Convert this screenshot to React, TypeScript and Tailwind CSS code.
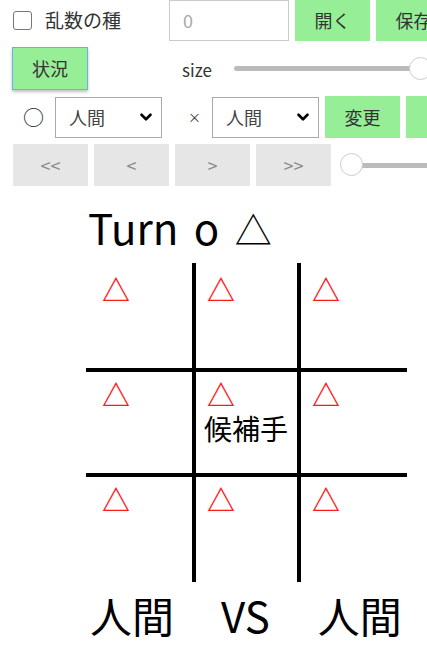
import React from 'react';
import { ChevronDown } from 'lucide-react';

const greenBtn = "h-full w-[75px] shrink-0 bg-[#96ee96] text-[#333] text-[18px] flex items-center justify-center";
const grayBtn = "h-[42px] w-[75px] shrink-0 bg-[#e6e6e6] text-[#8a8a8a] text-[18px] flex items-center justify-center";

function Select({ value }: { value: string }) {
    return (
        <div className="h-[41px] w-[107px] shrink-0 border border-[#aaa] flex items-center justify-between pl-[13px] pr-[6px] text-[18px] text-[#444]">
            <span>{value}</span>
            <ChevronDown className="w-[18px] h-[18px] text-black" strokeWidth={3.5} />
        </div>
    );
}

function Slider({ value }: { value: number }) {
    return (
        <div className="relative h-[24px] flex-1 flex items-center">
            <div className="h-[5px] w-full rounded-full bg-[#bbb]" />
            <div
                className="absolute top-0 w-[23px] h-[23px] rounded-full bg-white border border-[#ccc]"
                style={{ left: `calc(${value}% - 11px)` }}
            />
        </div>
    );
}

const marks = [0, 1, 2, 3, 4, 5, 6, 7, 8];

export default function App() {
    return (
        <div className="w-[427px] h-[645px] overflow-hidden bg-white text-black font-['Noto_Sans_CJK_JP',sans-serif]">
            {/* row 1 */}
            <div className="flex items-center h-[41px] whitespace-nowrap">
                <div className="ml-[13px] w-[19px] h-[19px] rounded-[3px] border-[1.5px] border-[#777] shrink-0" />
                <span className="ml-[13px] w-[124px] shrink-0 text-[19px] text-[#333]">乱数の種</span>
                <div className="h-[41px] w-[120px] shrink-0 border border-[#ccc] flex items-center pl-[13px] text-[18px] text-[#aaa]">0</div>
                <div className="ml-[6px] h-full flex gap-[6px] shrink-0">
                    <div className={greenBtn}>開く</div>
                    <div className={greenBtn}>保存</div>
                </div>
            </div>

            {/* row 2 */}
            <div className="flex items-center h-[43px] mt-[6px] whitespace-nowrap">
                <div className="ml-[12px] h-[43px] w-[76px] shrink-0 bg-[#96ee96] border-[1.5px] border-[#6aaff5] shadow-[0_2px_3px_rgba(0,0,0,0.25)] text-[18px] text-[#333] flex items-center justify-center">状況</div>
                <span className="ml-[94px] shrink-0 text-[17px] text-[#333] mt-[3px]">size</span>
                <div className="ml-[22px] w-[186px] shrink-0 flex">
                    <Slider value={100} />
                </div>
            </div>

            {/* row 3 */}
            <div className="flex items-center h-[42px] mt-[6px] whitespace-nowrap">
                <span className="ml-[23px] w-[32px] shrink-0 text-[21px] text-[#222]">○</span>
                <Select value="人間" />
                <span className="ml-[26px] w-[24px] shrink-0 text-[13px] text-[#333]">×</span>
                <Select value="人間" />
                <div className="ml-[6px] h-full flex gap-[6px] shrink-0">
                    <div className={greenBtn}>変更</div>
                    <div className={greenBtn}>&nbsp;</div>
                </div>
            </div>

            {/* row 4 */}
            <div className="flex items-center h-[42px] mt-[6px] pl-[13px] gap-[6px] whitespace-nowrap">
                <div className={grayBtn}>&lt;&lt;</div>
                <div className={grayBtn}>&lt;</div>
                <div className={grayBtn}>&gt;</div>
                <div className={grayBtn}>&gt;&gt;</div>
                <div className="ml-[3px] flex-1 flex pl-[11px] -mr-[30px]">
                    <Slider value={0} />
                </div>
            </div>

            {/* turn */}
            <div className="mt-[20px] pl-[88px] text-[42px] leading-none h-[42px] whitespace-nowrap [word-spacing:6px]">
                Turn o <span className="text-[37px]">△</span>
            </div>

            {/* board */}
            <div className="relative mt-[15px] ml-[86px] w-[321px] h-[319px]">
                <div className="absolute left-[106px] top-0 w-[4px] h-full bg-black" />
                <div className="absolute left-[211px] top-0 w-[4px] h-full bg-black" />
                <div className="absolute top-[105px] left-0 h-[4px] w-full bg-black" />
                <div className="absolute top-[210px] left-0 h-[4px] w-full bg-black" />
                <div className="grid grid-cols-[105px_105px_105px] grid-rows-[105px_105px_105px]">
                    {marks.map((i) => (
                        <div key={i} className="pl-[16px] pt-[12px] text-[28px] leading-none">
                            <div className="text-[#ff1a1a] font-bold">△</div>
                            {i === 4 && <div className="mt-[6px] -ml-[3px] text-[28px]">候補手</div>}
                        </div>
                    ))}
                </div>
            </div>

            {/* players */}
            <div className="mt-[12px] flex text-[42px] leading-none whitespace-nowrap">
                <span className="ml-[90px]">人間</span>
                <span className="ml-[47px]">VS</span>
                <span className="ml-[48px]">人間</span>
            </div>
        </div>
    );
}
